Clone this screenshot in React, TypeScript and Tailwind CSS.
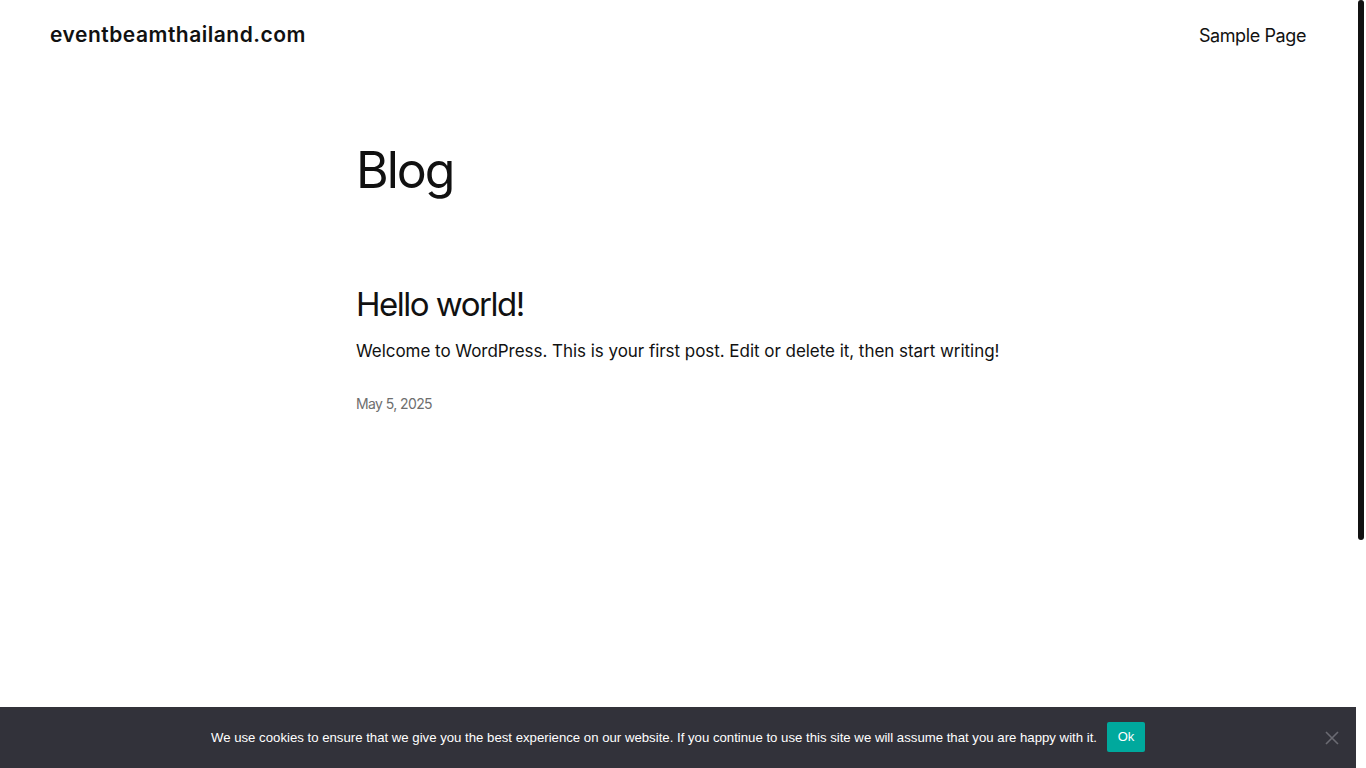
export default function App() {
  return (
    <div className="relative flex h-screen w-full overflow-hidden bg-white" style={{ fontFamily: "Inter, 'Noto Sans', sans-serif" }}>
      <div className="h-full flex-1 overflow-hidden">
        <div className="min-h-[1092px] text-[#111111]">
          <header className="flex items-center justify-between px-[50px] h-[70px]">
            <a className="text-[21px] font-semibold tracking-[0.5px]">eventbeamthailand.com</a>
            <nav>
              <a className="text-[18px] tracking-[-0.4px]">Sample Page</a>
            </nav>
          </header>
          <main className="mx-auto w-[644px] pt-[75px]">
            <h1 className="text-[50px] leading-none tracking-[-2px]">Blog</h1>
            <article className="mt-[93px]">
              <h2 className="text-[33px] leading-none tracking-[-1.5px]">Hello world!</h2>
              <p className="mt-[16px] whitespace-nowrap text-[17px] leading-[28px] tracking-[-0.04px]">
                Welcome to WordPress. This is your first post. Edit or delete it, then start writing!
              </p>
              <div className="mt-[28px] text-[14px] text-[#6e6e6e] tracking-[-0.6px]">May 5, 2025</div>
            </article>
          </main>
        </div>
      </div>
      <div className="h-full w-[10px] bg-white pl-[2px]">
        <div className="h-[540px] w-[6px] rounded-[3px] bg-[#111111]" />
      </div>
      <div className="absolute bottom-0 left-0 right-[10px] h-[61px] bg-[#32323a] flex items-center justify-center" style={{ fontFamily: "'Liberation Sans', Arial, sans-serif" }}>
        <span className="text-[13.2px] text-white">
          We use cookies to ensure that we give you the best experience on our website. If you continue to use this site we will assume that you are happy with it.
        </span>
        <button className="ml-[10px] -mt-[1px] h-[30px] w-[38px] rounded-[2px] bg-[#00a99d] text-[13px] text-white">Ok</button>
        <span className="absolute right-[17px] top-1/2 -translate-y-1/2 text-[#6b6b72]">
          <svg width="14" height="14" viewBox="0 0 14 14" stroke="currentColor" strokeWidth="1.6" fill="none">
            <path d="M1 1L13 13M13 1L1 13" />
          </svg>
        </span>
      </div>
    </div>
  );
}
